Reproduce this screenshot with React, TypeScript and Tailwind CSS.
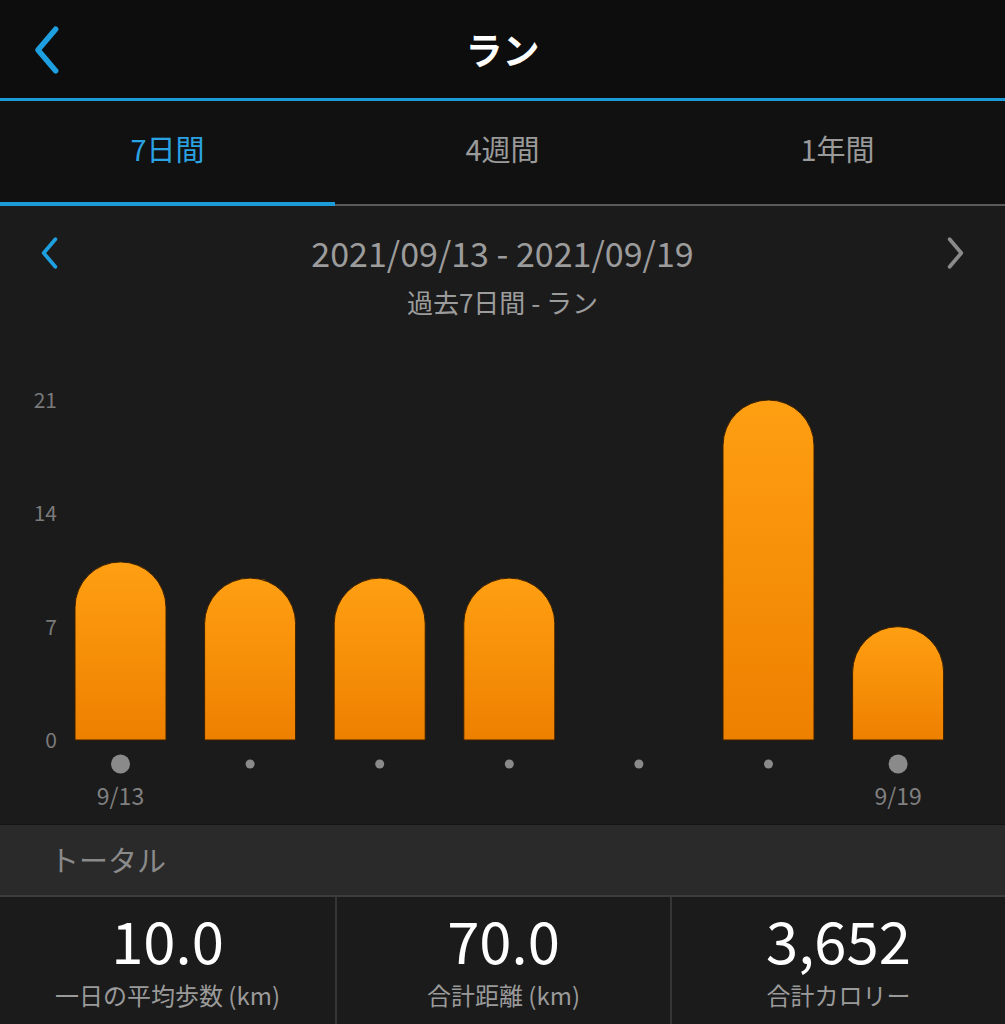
import React from "react";

const font = { fontFamily: '"Noto Sans CJK JP", "Noto Sans", sans-serif' };

const days = [
  { value: 11, label: "9/13", big: true },
  { value: 10, label: "", big: false },
  { value: 10, label: "", big: false },
  { value: 10, label: "", big: false },
  { value: 0, label: "", big: false },
  { value: 21, label: "", big: false },
  { value: 7, label: "9/19", big: true },
];

const stats = [
  { value: "10.0", label: "一日の平均歩数 (km)" },
  { value: "70.0", label: "合計距離 (km)" },
  { value: "3,652", label: "合計カロリー" },
];

function Chevron({ dir, className }: { dir: "left" | "right"; className: string }) {
  return (
    <svg viewBox="0 0 20 32" className={className} fill="none" stroke="currentColor" strokeWidth={3.5} strokeLinecap="round" strokeLinejoin="round">
      {dir === "left" ? <path d="M16 3 L5 16 L16 29" /> : <path d="M4 3 L15 16 L4 29" />}
    </svg>
  );
}

function Chart() {
  // baseline at svg y=410 (page y 740), 16.2px per km
  const base = 410;
  const unit = 16.19;
  const w = 91;
  return (
    <svg width={1005} height={494} viewBox="0 0 1005 494" className="block">
      {[0, 7, 14, 21].map((v) => (
        <text key={v} x={57} y={base - v * unit + 8} textAnchor="end" fontSize={21} fill="#7a7a7a" style={font}>
          {v}
        </text>
      ))}
      <defs>
        <linearGradient id="bar" x1="0" y1="0" x2="0" y2="1">
          <stop offset="0" stopColor="#ff9f12" />
          <stop offset="1" stopColor="#ee8000" />
        </linearGradient>
      </defs>
      {days.map((d, i) => {
        const cx = 120.5 + i * 129.6;
        const x = cx - w / 2;
        const h = d.value * unit;
        const r = w / 2;
        const top = base - h;
        return (
          <g key={i}>
            {d.value > 0 && (
              <path
                d={`M${x} ${base} L${x} ${top + r} A${r} ${r} 0 0 1 ${x + w} ${top + r} L${x + w} ${base} Z`}
                fill="url(#bar)"
                stroke="#3a2000"
                strokeWidth={1}
              />
            )}
            <circle cx={cx} cy={434} r={d.big ? 9.5 : 4.5} fill="#8a8a8a" />
            {d.label && (
              <text x={cx} y={475} textAnchor="middle" fontSize={23} fill="#808080" style={font}>
                {d.label}
              </text>
            )}
          </g>
        );
      })}
    </svg>
  );
}

export default function App() {
  return (
    <div className="w-[1005px] h-[1024px] overflow-hidden bg-[#1b1b1b]" style={font}>
      <header className="h-[98px] bg-[#0d0d0d] grid grid-cols-[100px_1fr_100px] items-center">
        <div className="pl-[30px] pt-[2px]">
          <Chevron dir="left" className="w-[32px] h-[52px] text-[#1ea0e0]" />
        </div>
        <h1 className="text-center text-white text-[37px] font-bold leading-none">ラン</h1>
        <div />
      </header>
      <div className="h-[3px] bg-[#1b9bd8]" />
      <nav className="bg-[#111111]">
        <div className="h-[101px] pb-[6px] grid grid-cols-3 items-center text-[29px]">
          <span className="text-center text-[#2aa3e2]">7日間</span>
          <span className="text-center text-[#9a9a9a]">4週間</span>
          <span className="text-center text-[#9a9a9a]">1年間</span>
        </div>
        <div className="h-[4px] flex items-end">
          <div className="w-[335px] h-[4px] bg-[#1b9bd8]" />
          <div className="flex-1 h-[2px] bg-[#5a5a5a]" />
        </div>
      </nav>
      <section className="h-[618px] bg-[#1b1b1b]">
        <div className="h-[124px] pt-[30px]">
          <div className="flex items-center justify-between px-[38px]">
            <Chevron dir="left" className="w-[22px] h-[34px] text-[#1ea0e0]" />
            <span className="text-[34px] text-[#9c9c9c] leading-none">2021/09/13 - 2021/09/19</span>
            <Chevron dir="right" className="w-[22px] h-[34px] text-[#8a8a8a]" />
          </div>
          <p className="text-center text-[26px] text-[#9c9c9c] mt-[19px] leading-none">過去7日間 - ラン</p>
        </div>
        <Chart />
      </section>
      <div className="h-[73px] bg-[#2a2a2a] border-t-[1px] border-[#141414] border-b-[2px] border-b-[#3c3c3c] flex items-center pl-[50px]">
        <span className="text-[29px] text-[#8a8a8a]">トータル</span>
      </div>
      <div className="grid grid-cols-3 h-[127px]">
        {stats.map((s, i) => (
          <div key={i} className={`flex flex-col items-center pt-[13px] ${i > 0 ? "border-l-[2px] border-[#353535]" : ""}`}>
            <span className="text-white text-[58px] leading-none">{s.value}</span>
            <span className="text-[#9a9a9a] text-[24px] mt-[15px] leading-none">{s.label}</span>
          </div>
        ))}
      </div>
    </div>
  );
}
